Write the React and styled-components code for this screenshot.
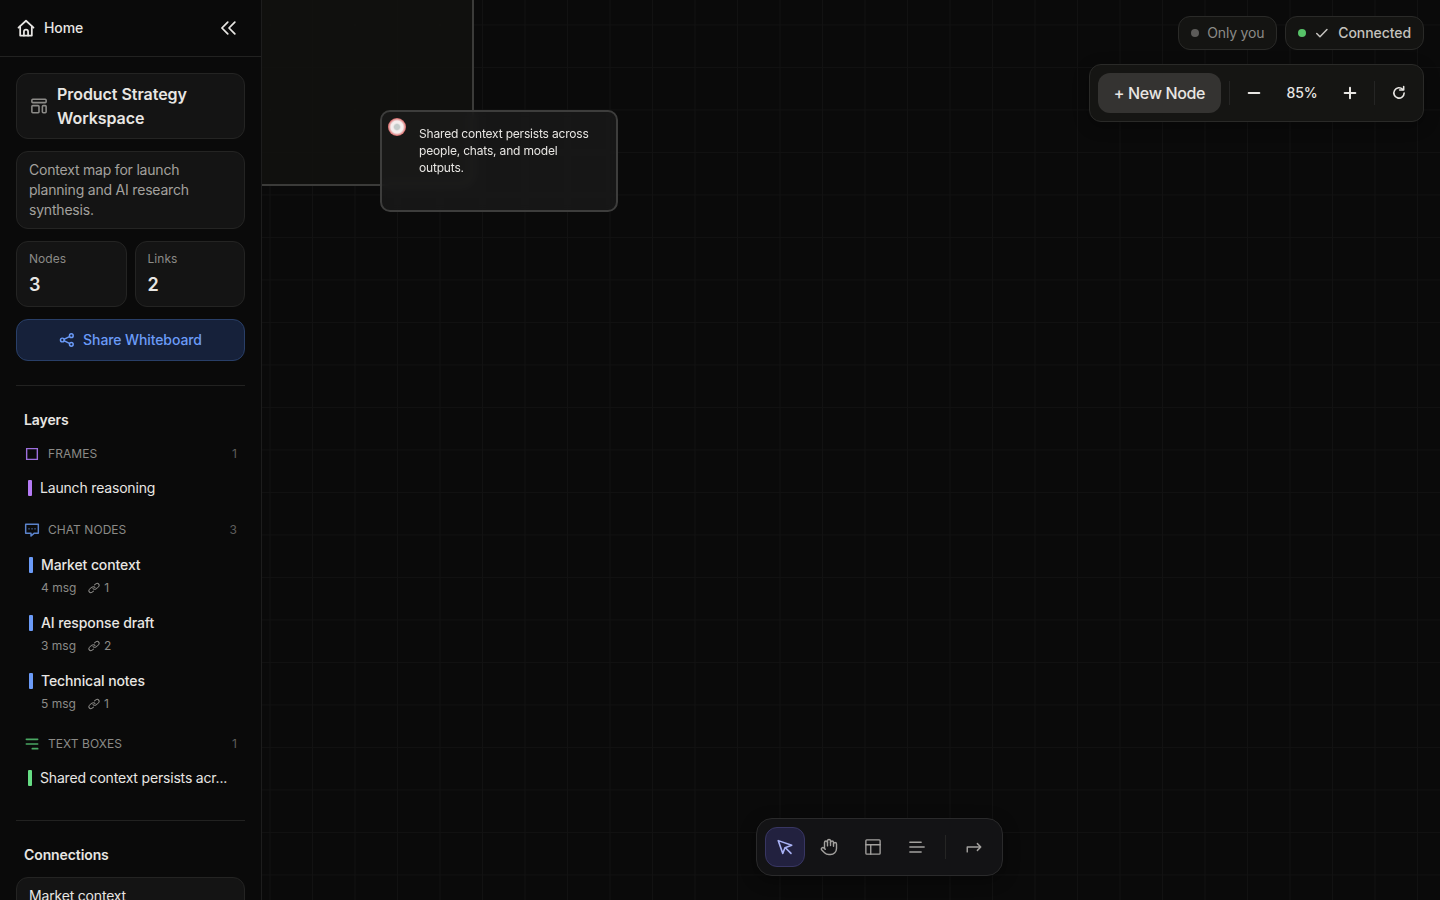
import styled, { createGlobalStyle, css } from "styled-components";

const GlobalStyle = createGlobalStyle`
  * {
    box-sizing: border-box;
  }

  body {
    margin: 0;
    background: #0a0a0a;
    color: #e8e6e3;
    font-family: Inter, "Liberation Sans", sans-serif;
    font-size: 14px;
    letter-spacing: -0.1px;
    overflow: hidden;
  }

  button {
    font: inherit;
    letter-spacing: inherit;
    color: inherit;
    border: none;
    background: none;
    padding: 0;
    cursor: pointer;
  }
`;

//icons
const Icon = ({ size = 16, stroke = 1.5, children }) => (
  <svg
    width={size}
    height={size}
    viewBox="0 0 24 24"
    fill="none"
    stroke="currentColor"
    strokeWidth={stroke}
    strokeLinecap="round"
    strokeLinejoin="round"
  >
    {children}
  </svg>
);

const HomeIcon = () => (
  <Icon size={20} stroke={2.1}>
    <path d="M3 11.5 12 3.300l9 8.200" />
    <path d="M5 10v11h14V10" />
    <path d="M9.500 21v-4.500a2.500 2.500 0 0 1 5 0V21" />
  </Icon>
);

const CollapseIcon = () => (
  <Icon size={20} stroke={2.1}>
    <path d="M10.500 5 3.500 12l7 7" />
    <path d="m19 5-7 7 7 7" />
  </Icon>
);

const BoardIcon = () => (
  <Icon size={18} stroke={2.1}>
    <rect x="2.500" y="3" width="19" height="4.500" rx="1.200" />
    <rect x="2.500" y="11.500" width="9.500" height="9.500" rx="1.200" />
    <rect x="16.500" y="11.500" width="5" height="9.500" rx="1.200" />
  </Icon>
);

const ShareIcon = () => (
  <Icon size={16} stroke={2.2}>
    <circle cx="5" cy="12" r="2.800" />
    <circle cx="18.500" cy="5.500" r="2.800" />
    <circle cx="18.500" cy="18.500" r="2.800" />
    <path d="m8 10.700 7.700-3.800M8 13.300l7.700 3.800" />
  </Icon>
);

const FrameIcon = () => (
  <Icon size={16} stroke={2.1}>
    <path d="M4 4h16v16H4z" strokeLinejoin="miter" />
  </Icon>
);

const ChatIcon = () => (
  <Icon size={16} stroke={2.2}>
    <path d="M2.500 3.500h19V17h-6.500L10.500 21v-4h-8z" />
    <path d="M7.500 10.300h.1M12 10.300h.1M16.500 10.300h.1" />
  </Icon>
);

const TextBoxIcon = () => (
  <Icon size={16} stroke={2.5}>
    <path d="M3.500 5h17M3.500 12h17M12.500 19h8" />
  </Icon>
);

const LinkIcon = () => (
  <Icon size={12} stroke={2.2}>
    <g transform="translate(12 12) rotate(-40) scale(1.02 0.8) rotate(45) translate(-12 -12)">
      <path d="M10 13a5 5 0 0 0 7.540.540l3-3a5 5 0 0 0-7.070-7.070l-1.720 1.710" />
      <path d="M14 11a5 5 0 0 0-7.540-.540l-3 3a5 5 0 0 0 7.070 7.070l1.710-1.710" />
    </g>
  </Icon>
);

const CheckIcon = () => (
  <Icon size={14} stroke={2.6}>
    <path d="m3 13 5.500 5.500L20.500 6" />
  </Icon>
);

const MinusIcon = () => (
  <Icon size={16} stroke={3}>
    <path d="M4 12h16" />
  </Icon>
);

const PlusIcon = () => (
  <Icon size={16} stroke={3}>
    <path d="M4 12h16M12 4v16" />
  </Icon>
);

const ResetIcon = () => (
  <Icon size={16} stroke={2.4}>
    <path d="M17.500 6.500A7.700 7.700 0 1 0 19.700 12" />
    <path d="M13 7.500h6V2.500" />
  </Icon>
);

const PointerIcon = () => (
  <Icon size={18} stroke={2.1}>
    <path d="M3 3.500 9 20.500l3-7.500L21 9.800z" />
    <path d="m12.500 13 7.500 7.500" />
  </Icon>
);

const HandIcon = () => (
  <Icon size={18} stroke={1.900}>
    <path d="M18 11V6a2 2 0 0 0-4 0" />
    <path d="M14 10V4a2 2 0 0 0-4 0v2" />
    <path d="M10 10.500V6a2 2 0 0 0-4 0v8" />
    <path d="M18 8a2 2 0 1 1 4 0v6a8 8 0 0 1-8 8h-2c-2.800 0-4.500-.860-5.990-2.340l-3.600-3.600a2 2 0 0 1 2.830-2.820L7 15" />
  </Icon>
);

const LayoutIcon = () => (
  <Icon size={18} stroke={1.800}>
    <rect x="2.500" y="2.500" width="19" height="19" rx="1.200" />
    <path d="M2.500 9h19M9 9v12.500" />
  </Icon>
);

const LinesIcon = () => (
  <Icon size={18} stroke={2}>
    <path d="M2.500 5.500h15M2.500 12h19M2.500 18.500h15" />
  </Icon>
);

const ArrowIcon = () => (
  <Icon size={18} stroke={1.900}>
    <path d="M3 18.500V12h18M16.500 7.500 21 12l-4.500 4.500" />
  </Icon>
);

//data
const chats = [
  { name: "Market context", messages: 4, links: 1 },
  { name: "AI response draft", messages: 3, links: 2 },
  { name: "Technical notes", messages: 5, links: 1 },
];

const LayerHeader = ({ icon, color, label, count }) => (
  <GroupHeader $color={color}>
    {icon}
    <span>{label}</span>
    <small>{count}</small>
  </GroupHeader>
);

const Sidebar = () => (
  <StyledSidebar>
    <SidebarHeader>
      <HomeLink>
        <HomeIcon />
        Home
      </HomeLink>
      <CollapseButton>
        <CollapseIcon />
      </CollapseButton>
    </SidebarHeader>
    <SidebarBody>
      <TitleCard>
        <BoardIcon />
        <h1>Product Strategy Workspace</h1>
      </TitleCard>
      <Description>
        Context map for launch planning and AI research synthesis.
      </Description>
      <Stats>
        <Stat>
          <span>Nodes</span>
          <strong>3</strong>
        </Stat>
        <Stat>
          <span>Links</span>
          <strong>2</strong>
        </Stat>
      </Stats>
      <ShareButton>
        <ShareIcon />
        Share Whiteboard
      </ShareButton>
      <Section>
        <SectionTitle>Layers</SectionTitle>
        <LayerGroup>
          <LayerHeader icon={<FrameIcon />} color="#9d6fdd" label="FRAMES" count={1} />
          <LayerItem>
            <Marker $color="#b57bf5" />
            <LayerName>Launch reasoning</LayerName>
          </LayerItem>
        </LayerGroup>
        <LayerGroup>
          <LayerHeader icon={<ChatIcon />} color="#5b83cc" label="CHAT NODES" count={3} />
          {chats.map((chat) => (
            <LayerItem $outlined key={chat.name}>
              <Marker $color="#6b9bf8" />
              <div>
                <LayerName $medium>{chat.name}</LayerName>
                <Meta>
                  <span>{chat.messages} msg</span>
                  <span>
                    <LinkIcon />
                    {chat.links}
                  </span>
                </Meta>
              </div>
            </LayerItem>
          ))}
        </LayerGroup>
        <LayerGroup>
          <LayerHeader icon={<TextBoxIcon />} color="#4aa763" label="TEXT BOXES" count={1} />
          <LayerItem>
            <Marker $color="#66dd84" />
            <LayerName>Shared context persists acr...</LayerName>
          </LayerItem>
        </LayerGroup>
      </Section>
      <Section>
        <SectionTitle>Connections</SectionTitle>
        <ConnectionCard>Market context</ConnectionCard>
      </Section>
    </SidebarBody>
  </StyledSidebar>
);

const App = () => {
  return (
    <>
      <GlobalStyle />
      <Page>
        <Sidebar />
        <Canvas>
          <FrameNode />
          <TextNode>
            <Handle />
            <p>Shared context persists across people, chats, and model outputs.</p>
          </TextNode>
          <Controls>
            <StatusRow>
              <Pill>
                <Dot $color="#5c5b59" />
                Only you
              </Pill>
              <Pill $online>
                <Dot $color="#57c268" />
                <CheckIcon />
                <span>Connected</span>
              </Pill>
            </StatusRow>
            <ZoomBar>
              <NewNodeButton>+ New Node</NewNodeButton>
              <Separator />
              <ZoomButton>
                <MinusIcon />
              </ZoomButton>
              <ZoomLevel>85%</ZoomLevel>
              <ZoomButton>
                <PlusIcon />
              </ZoomButton>
              <Separator />
              <ZoomButton>
                <ResetIcon />
              </ZoomButton>
            </ZoomBar>
          </Controls>
          <ToolBar>
            <ToolButton $active>
              <PointerIcon />
            </ToolButton>
            <ToolButton>
              <HandIcon />
            </ToolButton>
            <ToolButton>
              <LayoutIcon />
            </ToolButton>
            <ToolButton>
              <LinesIcon />
            </ToolButton>
            <Separator $tool />
            <ToolButton>
              <ArrowIcon />
            </ToolButton>
          </ToolBar>
        </Canvas>
      </Page>
    </>
  );
};

//layout
const Page = styled.div`
  display: flex;
  width: 100%;
  height: 100vh;
  overflow: hidden;
`;

const StyledSidebar = styled.aside`
  display: flex;
  flex-direction: column;
  flex: none;
  width: 262px;
  height: 100%;
  background: #0a0a0a;
  border-right: 1px solid #1d1d1d;
  overflow: hidden;
`;

const SidebarHeader = styled.header`
  display: flex;
  flex: none;
  align-items: center;
  justify-content: space-between;
  height: 57px;
  padding: 0 22px 0 16px;
  border-bottom: 1px solid #222221;
`;

const HomeLink = styled.a`
  display: flex;
  align-items: center;
  gap: 8px;
  font-weight: 500;
  line-height: 18px;
`;

const CollapseButton = styled.button`
  display: flex;
`;

const SidebarBody = styled.div`
  display: flex;
  flex-direction: column;
  flex: none;
  padding: 16px;
`;

const card = css`
  background: #141414;
  border: 1px solid #242423;
  border-radius: 12px;
`;

const TitleCard = styled.div`
  ${card}
  display: flex;
  align-items: center;
  gap: 9px;
  padding: 8px 13px;

  svg {
    flex: none;
    color: #8b8a87;
  }

  h1 {
    margin: 0;
    font-size: 16px;
    font-weight: 600;
    line-height: 24px;
    letter-spacing: -0.05px;
  }
`;

const Description = styled.p`
  ${card}
  margin: 12px 0 0;
  padding: 8px 12px;
  color: #a3a19e;
  line-height: 20px;
  letter-spacing: -0.2px;
`;

const Stats = styled.div`
  display: grid;
  grid-template-columns: 1fr 1fr;
  gap: 8px;
  margin-top: 12px;
`;

const Stat = styled.div`
  ${card}
  display: flex;
  flex-direction: column;
  height: 66px;
  padding: 9px 12px 7px;

  span {
    color: #8b8a87;
    font-size: 12px;
    line-height: 16px;
    letter-spacing: 0.05px;
  }

  strong {
    margin-top: 4px;
    font-size: 18px;
    font-weight: 600;
    line-height: 28px;
  }
`;

const ShareButton = styled.button`
  display: flex;
  align-items: center;
  justify-content: center;
  gap: 8px;
  height: 42px;
  margin-top: 12px;
  padding-bottom: 1px;
  background: #16213a;
  border: 1px solid #293f68;
  border-radius: 12px;
  color: #6b9bf8;
  font-weight: 500;
`;

const Section = styled.section`
  margin-top: 24px;
  padding-top: 24px;
  border-top: 1px solid #222221;
`;

const SectionTitle = styled.h2`
  margin: 0;
  padding: 0 8px;
  font-size: 14px;
  font-weight: 600;
  line-height: 20px;
`;

//layers
const LayerGroup = styled.div`
  margin-top: 14px;
`;

const GroupHeader = styled.div`
  display: flex;
  align-items: center;
  gap: 8px;
  height: 20px;
  margin-bottom: 6px;
  padding: 0 8px;
  color: #8b8a87;
  font-size: 12px;
  line-height: 18px;
  letter-spacing: 0.05px;

  svg {
    color: ${(props) => props.$color};
  }

  small {
    margin-left: auto;
    color: #5e5d5b;
    font-size: 12px;
  }
`;

const LayerItem = styled.div`
  display: flex;
  align-items: flex-start;
  gap: 8px;
  padding: 8px 8px 8px 12px;
  border: ${(props) => (props.$outlined ? "1px solid transparent" : "none")};
`;

const Marker = styled.span`
  flex: none;
  width: 4px;
  height: 16px;
  margin-top: 2px;
  border-radius: 1px;
  background: ${(props) => props.$color};
`;

const LayerName = styled.div`
  line-height: 20px;
  font-weight: ${(props) => (props.$medium ? 500 : 400)};
  letter-spacing: ${(props) => (props.$medium ? "-0.1px" : "-0.18px")};
  white-space: nowrap;
`;

const Meta = styled.div`
  display: flex;
  gap: 12px;
  margin: 5px 0 -1px;
  color: #8b8a87;
  font-size: 12px;
  line-height: 16px;
  letter-spacing: 0;

  span {
    display: flex;
    align-items: center;
    gap: 4px;
  }
`;

const ConnectionCard = styled.div`
  ${card}
  height: 64px;
  margin-top: 12px;
  padding: 8px 12px;
  line-height: 20px;
  letter-spacing: -0.18px;
`;

//canvas
const Canvas = styled.main`
  position: relative;
  flex: 1;
  overflow: hidden;
  background-color: #0a0a0a;
  background-image:
    linear-gradient(90deg, #121212 1px, transparent 1px),
    linear-gradient(#111111 1px, transparent 1px);
  background-size: 42.5px 42.5px;
  background-position: 7.5px 24.5px;
`;

const FrameNode = styled.div`
  position: absolute;
  left: -40px;
  top: -40px;
  width: 252px;
  height: 226px;
  background: rgba(18, 18, 15, 0.8);
  border: 2px solid #3b3b39;
  border-radius: 0 0 12px 0;
`;

const TextNode = styled.div`
  position: absolute;
  left: 118px;
  top: 110px;
  width: 238px;
  height: 102px;
  padding: 13px 20px 0 37px;
  background: rgba(28, 28, 28, 0.72);
  backdrop-filter: blur(4px);
  border: 2px solid #3d3d3c;
  border-radius: 10px;

  p {
    margin: 0;
    font-size: 12px;
    line-height: 17px;
    letter-spacing: -0.18px;
  }
`;

const Handle = styled.span`
  position: absolute;
  left: 6px;
  top: 6px;
  width: 18px;
  height: 18px;
  border-radius: 50%;
  background: radial-gradient(circle, #c4cbca 0 2.5px, #f5eeee 4px 6px, #dc7777 8.5px);
`;

const Controls = styled.div`
  position: absolute;
  top: 16px;
  right: 16px;
  display: flex;
  flex-direction: column;
  align-items: flex-end;
  gap: 14px;
`;

const StatusRow = styled.div`
  display: flex;
  gap: 8px;
`;

const Pill = styled.div`
  display: flex;
  align-items: center;
  gap: ${(props) => (props.$online ? "9px" : "8px")};
  height: 34px;
  padding: 0 12px;
  background: #141412;
  border: 1px solid #2a2a28;
  border-radius: 12px;
  color: ${(props) => (props.$online ? "#c4c2be" : "#8b8a87")};
  font-weight: ${(props) => (props.$online ? 500 : 400)};
  letter-spacing: ${(props) => (props.$online ? "-0.07px" : "-0.2px")};
  line-height: 18px;
`;

const Dot = styled.span`
  width: 8px;
  height: 8px;
  border-radius: 50%;
  background: ${(props) => props.$color};
`;

const ZoomBar = styled.div`
  display: flex;
  align-items: center;
  gap: 8px;
  height: 58px;
  padding: 8px;
  background: #151513;
  border: 1px solid #2a2a28;
  border-radius: 12px;
  box-shadow: 0 4px 16px rgba(0, 0, 0, 0.3);
`;

const NewNodeButton = styled.button`
  width: 123px;
  height: 40px;
  border-radius: 12px;
  background: #343331;
  font-size: 16px;
  font-weight: 500;
  letter-spacing: -0.34px;
`;

const Separator = styled.span`
  width: 1px;
  height: 24px;
  margin: ${(props) => (props.$tool ? "0 4px" : "0")};
  background: #252524;
`;

const ZoomButton = styled.button`
  display: flex;
  align-items: center;
  justify-content: center;
  width: 32px;
  height: 32px;
`;

const ZoomLevel = styled.span`
  width: 48px;
  font-weight: 500;
  line-height: 18px;
  text-align: center;
`;

const ToolBar = styled.div`
  position: absolute;
  left: 494.4px;
  bottom: 24px;
  display: flex;
  align-items: center;
  gap: 4px;
  height: 58px;
  padding: 8px;
  background: #131315;
  border: 1px solid #2a2a2b;
  border-radius: 16px;
  box-shadow: 0 4px 16px rgba(0, 0, 0, 0.4);
`;

const ToolButton = styled.button`
  display: flex;
  align-items: center;
  justify-content: center;
  width: 40px;
  height: 40px;
  border: 1px solid ${(props) => (props.$active ? "#383663" : "transparent")};
  border-radius: 12px;
  background: ${(props) => (props.$active ? "#22213f" : "transparent")};
  color: ${(props) => (props.$active ? "#a9b2f5" : "#a3a19e")};
`;

export default App;
